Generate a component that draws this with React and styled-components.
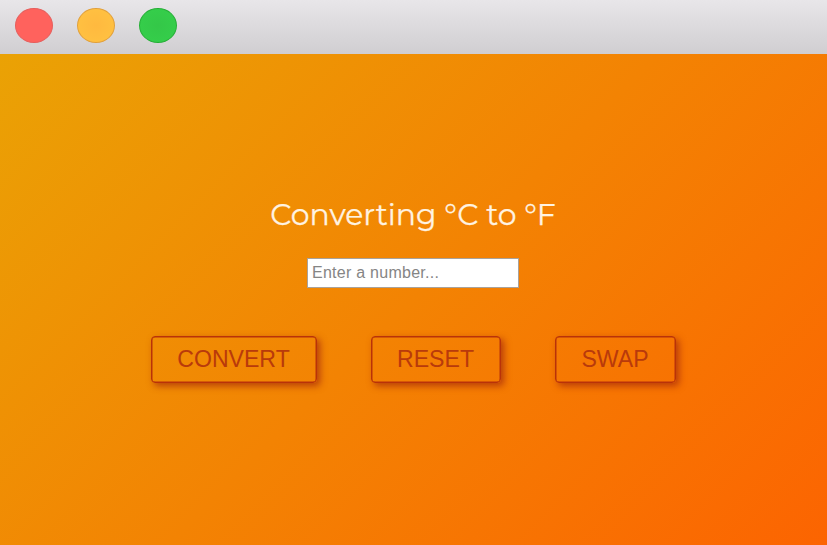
import React from 'react';
import styled, { createGlobalStyle } from 'styled-components';

const GlobalStyle = createGlobalStyle`
  *, *::before, *::after { box-sizing: border-box; }
  body { margin: 0; overflow: hidden; }
`;

const Window = styled.div`
  display: flex;
  flex-direction: column;
  height: 100vh;
  font-family: "Liberation Sans", Arial, sans-serif;
`;

const TitleBar = styled.header`
  display: flex;
  flex: 0 0 54px;
  gap: 24px;
  padding: 7.5px 0 0 15px;
  background: linear-gradient(#e8e6e9, #d0ced1);
`;

const WindowDot = styled.span`
  width: 38px;
  height: 35px;
  border: 1px solid ${({ $edge }) => $edge};
  border-radius: 50%;
  background: ${({ $fill }) => $fill};
`;

const Content = styled.main`
  display: flex;
  flex: 1;
  flex-direction: column;
  align-items: center;
  padding-top: 142px;
  background: linear-gradient(135deg, #eaa205, #fc6401);
`;

const Title = styled.h1`
  margin: 0 1px 0 0;
  height: 38px;
  line-height: 38px;
  color: #fff3e2;
  font-family: Montserrat, sans-serif;
  font-size: 29.9px;
  font-weight: 400;
  -webkit-text-stroke: 0.25px #fff3e2;
  white-space: nowrap;
`;

const NumberInput = styled.input`
  width: 212px;
  height: 30px;
  margin: 24px 1px 0 0;
  padding: 0 4px;
  border: 1px solid #a9a29b;
  border-radius: 0;
  outline: none;
  background: #fff;
  color: #222;
  font: 16px "Liberation Sans", Arial, sans-serif;
  letter-spacing: 0.26px;

  &::placeholder { color: #858585; opacity: 1; }
`;

const Actions = styled.div`
  display: flex;
  gap: 54px;
  margin: 48px 1px 0 0;
`;

const ActionButton = styled.button`
  width: ${({ $width }) => $width}px;
  height: 47px;
  padding: 0 0 1px;
  border: 1.5px solid #b93209;
  box-shadow: 3px 3px 7px rgba(165, 42, 12, 0.75), inset 0 0 0 0.5px #b93209;
  border-radius: 4px;
  background: transparent;
  color: #b93a0b;
  font: 23.1px "Liberation Sans", Arial, sans-serif;
  white-space: nowrap;
`;

export default function App() {
  return (
    <>
      <GlobalStyle />
      <Window>
        <TitleBar>
          <WindowDot $fill="#ff625d" $edge="#e65f5d" />
          <WindowDot $fill="radial-gradient(#ffb93f, #ffc342)" $edge="#e2a03a" />
          <WindowDot $fill="radial-gradient(#34c748, #35d04b)" $edge="#25af36" />
        </TitleBar>
        <Content>
          <Title>Converting °C to °F</Title>
          <NumberInput placeholder="Enter a number..." />
          <Actions>
            <ActionButton $width={166}>CONVERT</ActionButton>
            <ActionButton $width={130}>RESET</ActionButton>
            <ActionButton $width={121}>SWAP</ActionButton>
          </Actions>
        </Content>
      </Window>
    </>
  );
}
